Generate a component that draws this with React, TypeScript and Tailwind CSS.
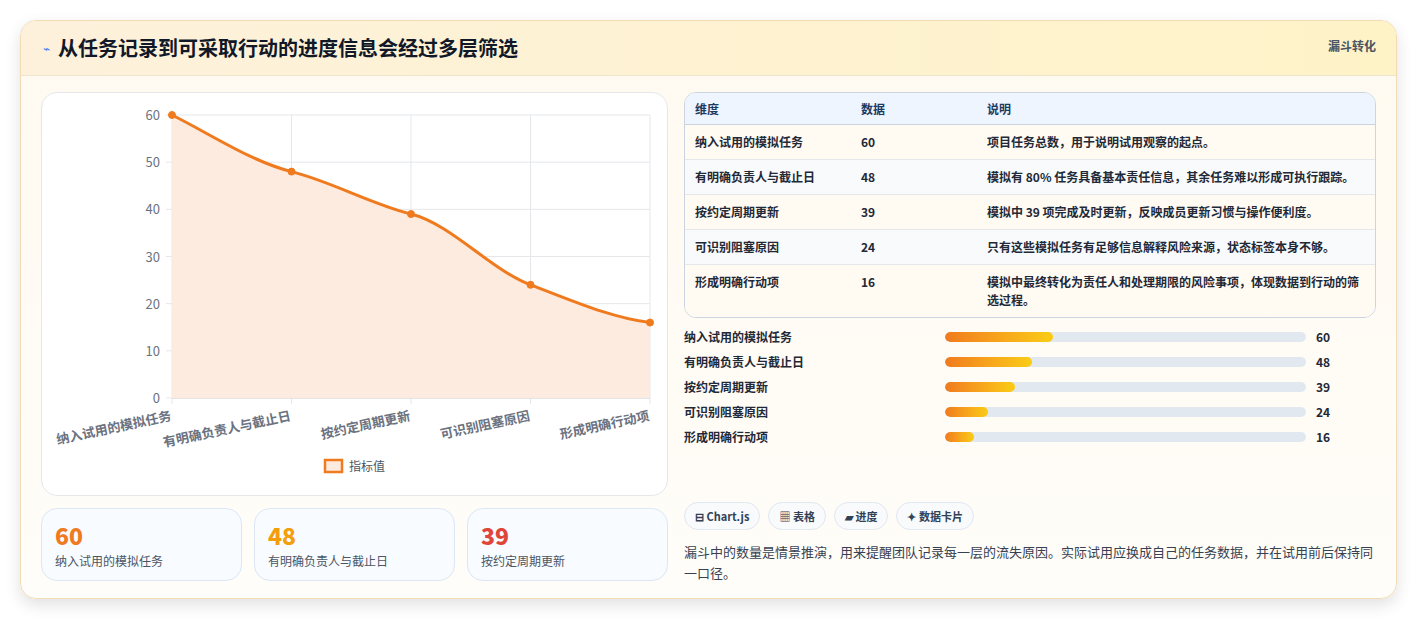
const font = { fontFamily: '"Noto Sans CJK SC", "Noto Sans", sans-serif' };

const rows = [
  { name: '纳入试用的模拟任务', v: 60, desc: '项目任务总数，用于说明试用观察的起点。' },
  { name: '有明确负责人与截止日', v: 48, desc: '模拟有 80% 任务具备基本责任信息，其余任务难以形成可执行跟踪。' },
  { name: '按约定周期更新', v: 39, desc: '模拟中 39 项完成及时更新，反映成员更新习惯与操作便利度。' },
  { name: '可识别阻塞原因', v: 24, desc: '只有这些模拟任务有足够信息解释风险来源，状态标签本身不够。' },
  { name: '形成明确行动项', v: 16, desc: '模拟中最终转化为责任人和处理期限的风险事项，体现数据到行动的筛选过程。' },
];

function Chart() {
  const x0 = 130, x1 = 608, y0 = 22, y1 = 305;
  const xs = rows.map((_, i) => x0 + ((x1 - x0) * i) / 4);
  const ys = rows.map(r => y1 - (r.v / 60) * (y1 - y0));
  const pts = xs.map((x, i) => `${x},${ys[i]}`);
  const line = `M${pts[0]} C${xs[0] + 40},${ys[0] + 20} ${xs[1] - 40},${ys[1] - 10} ${pts[1]} S${xs[2] - 40},${ys[2] - 10} ${pts[2]} S${xs[3] - 40},${ys[3] - 15} ${pts[3]} S${xs[4] - 40},${ys[4] - 5} ${pts[4]}`;
  return (
    <svg width="627" height="400" viewBox="0 0 627 400">
      {[0, 10, 20, 30, 40, 50, 60].map(t => {
        const y = y1 - (t / 60) * (y1 - y0);
        return (
          <g key={t}>
            <line x1={x0 - 6} x2={x1} y1={y} y2={y} stroke="#e5e7eb" />
            <text x={x0 - 12} y={y + 5} textAnchor="end" fontSize="13" fill="#6b7280">{t}</text>
          </g>
        );
      })}
      {xs.map((x, i) => <line key={i} x1={x} x2={x} y1={y0} y2={y1 + 6} stroke="#e5e7eb" />)}
      <line x1={x0} x2={x1} y1={y1} y2={y1} stroke="#d1d5db" />
      <path d={`${line} L${x1},${y1} L${x0},${y1} Z`} fill="#fdebdf" />
      <path d={line} fill="none" stroke="#f07a1e" strokeWidth="3" />
      {xs.map((x, i) => <circle key={i} cx={x} cy={ys[i]} r="3.5" fill="#f07a1e" stroke="#f07a1e" />)}
      {rows.map((r, i) => (
        <text key={i} x={xs[i]} y={y1 + 22} textAnchor="end" fontSize="13" fontWeight="600" fill="#6b7280" transform={`rotate(-12 ${xs[i]} ${y1 + 22})`}>{r.name}</text>
      ))}
      <rect x="283" y="367" width="17" height="12" fill="#fdebdf" stroke="#f07a1e" strokeWidth="2.5" />
      <text x="307" y="378" fontSize="12" fill="#4b5563">指标值</text>
    </svg>
  );
}

export default function App() {
  return (
    <div className="w-[1417px] h-[621px] bg-white pt-[20px] pl-[20px]" style={font}>
      <div className="w-[1377px] h-[579px] rounded-2xl border border-[#f3dcb5] shadow-[0_6px_16px_rgba(0,0,0,0.12)] overflow-hidden bg-gradient-to-b from-[#fffaf0] to-[#fffdf9]">
        <div className="h-[55px] flex items-center justify-between pl-[22px] pr-5 bg-gradient-to-r from-[#fdf1dc] to-[#fef3c7] border-b border-[#f1e4cc]">
          <div className="flex items-center gap-[8px]">
            <span className="text-[12px] text-[#3b82f6]">⌁</span>
            <h1 className="text-[20px] font-bold text-[#111827]">从任务记录到可采取行动的进度信息会经过多层筛选</h1>
          </div>
          <span className="text-[12px] font-semibold text-[#4b5563] self-start mt-4">漏斗转化</span>
        </div>
        <div className="flex gap-4 px-5 pt-[16px]">
          <div className="w-[627px] flex flex-col gap-3">
            <div className="h-[404px] rounded-2xl border border-[#e5e7eb] bg-white overflow-hidden"><Chart /></div>
            <div className="grid grid-cols-3 gap-3">
              {[['60', 'text-[#f07a1e]', rows[0].name], ['48', 'text-[#f59e0b]', rows[1].name], ['39', 'text-[#e0453a]', rows[2].name]].map(([v, c, l]) => (
                <div key={v} className="h-[73px] rounded-2xl border border-[#dbe7f5] bg-[#f8fbff] px-[13px] pt-[12px]">
                  <div className={`text-[23px] leading-[28px] font-extrabold ${c}`}>{v}</div>
                  <div className="text-[12px] text-[#4b5563] mt-[3px]">{l}</div>
                </div>
              ))}
            </div>
          </div>
          <div className="flex-1 flex flex-col">
            <div className="rounded-xl border border-[#cbd5e1] overflow-hidden bg-white text-[12px] text-[#1f2937]">
              <div className="h-[32px] flex items-center bg-[#eef5ff] font-semibold text-[#1e3a5f] border-b border-[#cbd5e1]">
                <div className="w-[176px] pl-[10px]">维度</div><div className="w-[126px]">数据</div><div>说明</div>
              </div>
              {rows.map((r, i) => (
                <div key={i} className={`flex items-start py-[8px] leading-[18px] border-b border-[#e5e7eb] last:border-b-0 font-semibold ${i % 2 ? 'bg-[#f8fafc]' : 'bg-[#fffaf2]'}`}>
                  <div className="w-[176px] pl-[10px]">{r.name}</div>
                  <div className="w-[126px]">{r.v}</div>
                  <div className="flex-1 pr-2">{r.desc}</div>
                </div>
              ))}
            </div>
            <div className="mt-[10px] flex flex-col gap-[7px]">
              {rows.map((r, i) => (
                <div key={i} className="h-[18px] flex items-center text-[12px] font-semibold text-[#1f2937]">
                  <div className="w-[261px]">{r.name}</div>
                  <div className="w-[361px] h-[10px] rounded-full bg-[#e2e8f0] overflow-hidden">
                    <div className="h-full rounded-full bg-gradient-to-r from-[#f07a1e] to-[#facc15]" style={{ width: `${(r.v / 200) * 100}%` }} />
                  </div>
                  <div className="ml-[10px]">{r.v}</div>
                </div>
              ))}
            </div>
            <div className="flex gap-2 mt-[56px]">
              {['⊟ Chart.js', '▦ 表格', '▰ 进度', '✦ 数据卡片'].map(t => (
                <span key={t} className="h-[28px] px-[10px] flex items-center rounded-full border border-[#e2e8f0] bg-[#f8fafc] text-[11px] font-semibold text-[#334155]">{t}</span>
              ))}
            </div>
            <p className="mt-[11px] text-[13px] leading-[21px] text-[#374151]">漏斗中的数量是情景推演，用来提醒团队记录每一层的流失原因。实际试用应换成自己的任务数据，并在试用前后保持同一口径。</p>
          </div>
        </div>
      </div>
    </div>
  );
}
